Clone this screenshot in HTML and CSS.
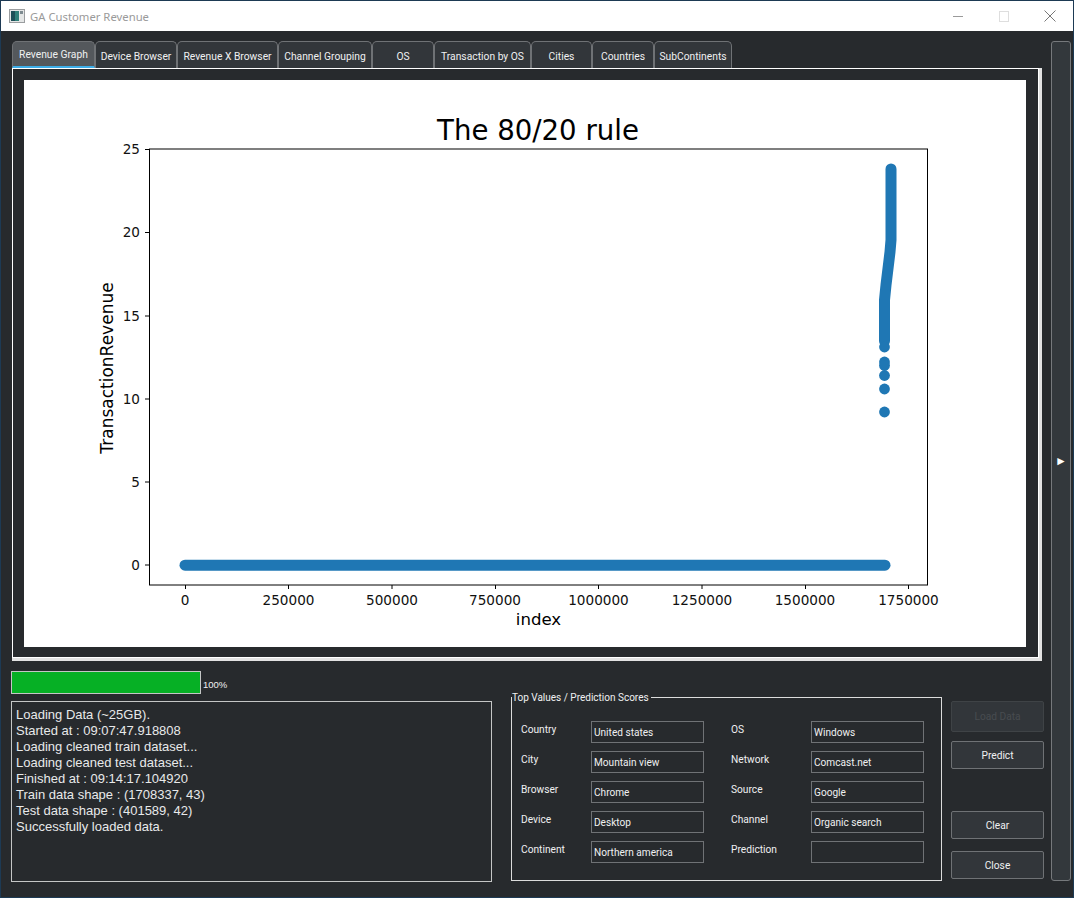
FILE: index.html
```html
<!DOCTYPE html>
<html lang="en">
  <head>
    <meta charset="UTF-8" />
    <meta name="viewport" content="width=device-width, initial-scale=1.0" />
    <title>GA Customer Revenue</title>
    <link rel="stylesheet" href="styles.css">
  </head>
  <body>
    <div class="window">
      <div class="titlebar">
        <svg class="app-icon" width="16" height="14" viewBox="0 0 16 14">
          <rect x="0.5" y="0.5" width="15" height="13" fill="#e4e6e6" stroke="#9a9d9f" />
          <rect x="2" y="2" width="8" height="10" fill="#2f7f78" />
          <rect x="2" y="2" width="4" height="10" fill="#1d4f57" />
          <rect x="11" y="2" width="3" height="3" fill="#7d8a90" />
        </svg>
        <span class="app-title">GA Customer Revenue</span>
        <div class="win-controls">
          <svg class="win-btn" width="46" height="30" viewBox="0 0 46 30">
            <path d="M18 15.5h10" stroke="#9a9a9a" />
          </svg>
          <svg class="win-btn" width="46" height="30" viewBox="0 0 46 30">
            <rect x="18.5" y="10.5" width="9" height="10" fill="none" stroke="#dedede" />
          </svg>
          <svg class="win-btn" width="46" height="30" viewBox="0 0 46 30">
            <path d="M17.5 9.5l11 11M28.5 9.5l-11 11" stroke="#777" fill="none" />
          </svg>
        </div>
      </div>

      <div class="content">
        <div class="left-side">
          <div class="tabs">
            <div class="tab active w1">Revenue Graph</div>
            <div class="tab w2">Device Browser</div>
            <div class="tab w3">Revenue X Browser</div>
            <div class="tab w4">Channel Grouping</div>
            <div class="tab w5">OS</div>
            <div class="tab w6">Transaction by OS</div>
            <div class="tab w7">Cities</div>
            <div class="tab w5">Countries</div>
            <div class="tab w8">SubContinents</div>
          </div>

          <div class="pane">
            <div class="pane-inner">
              <svg class="chart" width="1002" height="567" viewBox="24 80 1002 567">
                <rect x="24" y="80" width="1002" height="567" fill="#fff" />

                <!-- scatter -->
                <g fill="none" stroke="#1f77b4" stroke-linecap="round" stroke-width="11">
                  <path d="M185 565.2H885" />
                  <path d="M891 169V240L890 252L886 285L884.5 300V341" />
                </g>
                <g fill="#1f77b4">
                  <circle cx="884.5" cy="347" r="5.4" />
                  <circle cx="884.5" cy="362" r="5.4" />
                  <circle cx="884.5" cy="365.5" r="5.4" />
                  <circle cx="884.5" cy="375.5" r="5.4" />
                  <circle cx="884.5" cy="389" r="5.4" />
                  <circle cx="884.5" cy="412" r="5.4" />
                </g>

                <!-- axes -->
                <rect x="149.5" y="149" width="778" height="436" fill="none" stroke="#000" />
                <path stroke="#000" fill="none" d="M145 149.5h4M145 232.5h4M145 316h4M145 399h4M145 482h4M145 565h4M185.5 585v4M288.5 585v4M392 585v4M495.5 585v4M598.5 585v4M702 585v4M805.5 585v4M908.5 585v4" />

                <g class="tick" text-anchor="end">
                  <text x="140" y="154">25</text>
                  <text x="140" y="237">20</text>
                  <text x="140" y="321">15</text>
                  <text x="140" y="404">10</text>
                  <text x="140" y="487">5</text>
                  <text x="140" y="570">0</text>
                </g>
                <g class="tick" text-anchor="middle">
                  <text x="185" y="605">0</text>
                  <text x="288.5" y="605">250000</text>
                  <text x="392" y="605">500000</text>
                  <text x="495" y="605">750000</text>
                  <text x="598.5" y="605">1000000</text>
                  <text x="702" y="605">1250000</text>
                  <text x="805" y="605">1500000</text>
                  <text x="908.5" y="605">1750000</text>
                </g>

                <text class="chart-title" x="538" y="140" text-anchor="middle">The 80/20 rule</text>
                <text class="axis-label axis-x" x="538.5" y="625" text-anchor="middle">index</text>
                <text class="axis-label" transform="translate(112.5 368) rotate(-90)" text-anchor="middle">TransactionRevenue</text>
              </svg>
            </div>
          </div>

          <div class="bottom">
            <div class="status">
              <div class="progress-row">
                <div class="progress"><div class="progress-fill"></div></div>
                <span class="progress-text">100%</span>
              </div>
              <div class="log">
                <div>Loading Data (~25GB).</div>
                <div>Started at : 09:07:47.918808</div>
                <div>Loading cleaned train dataset...</div>
                <div>Loading cleaned test dataset...</div>
                <div>Finished at : 09:14:17.104920</div>
                <div>Train data shape : (1708337, 43)</div>
                <div>Test data shape : (401589, 42)</div>
                <div>Successfully loaded data.</div>
              </div>
            </div>

            <fieldset class="scores">
              <legend>Top Values / Prediction Scores</legend>
              <div class="score-grid">
                <label>Country</label>
                <div class="value">United states</div>
                <label>OS</label>
                <div class="value">Windows</div>

                <label>City</label>
                <div class="value">Mountain view</div>
                <label>Network</label>
                <div class="value">Comcast.net</div>

                <label>Browser</label>
                <div class="value">Chrome</div>
                <label>Source</label>
                <div class="value">Google</div>

                <label>Device</label>
                <div class="value">Desktop</div>
                <label>Channel</label>
                <div class="value">Organic search</div>

                <label>Continent</label>
                <div class="value">Northern america</div>
                <label>Prediction</label>
                <div class="value"></div>
              </div>
            </fieldset>

            <div class="actions">
              <button type="button" class="btn-load" disabled>Load Data</button>
              <button type="button" class="btn-predict">Predict</button>
              <button type="button" class="btn-clear">Clear</button>
              <button type="button">Close</button>
            </div>
          </div>
        </div>

        <div class="side-toggle">&#9658;</div>
      </div>
    </div>
  </body>
</html>
```

FILE: styles.css
```css
* {
  margin: 0;
  padding: 0;
  box-sizing: border-box;
}

body {
  background-color: #272a2d;
  font-family: "Roboto", "Liberation Sans", sans-serif;
  font-size: 10.2px;
  color: #eff0f1;
  overflow: hidden;
}

.window {
  width: 1074px;
  height: 898px;
  display: flex;
  flex-direction: column;
  border: 1px solid #1d3a54;
  background-color: #272a2d;
}

.titlebar {
  height: 30px;
  flex-shrink: 0;
  background-color: #fff;
  display: flex;
  align-items: center;
  padding-left: 8px;
}

.app-icon {
  margin-right: 5px;
}

.app-title {
  font-family: "Noto Sans", sans-serif;
  font-size: 11.3px;
  color: #9a9a9a;
}

.win-controls {
  margin-left: auto;
  display: flex;
}

.content {
  flex: 1;
  display: flex;
  padding: 10px 2px 15px 10px;
  min-height: 0;
}

.left-side {
  width: 1033px;
  display: flex;
  flex-direction: column;
}

/* tabs */
.tabs {
  display: flex;
  height: 27px;
  flex-shrink: 0;
  margin-left: 1px;
}

.tab {
  display: flex;
  align-items: center;
  justify-content: center;
  padding-top: 3px;
  background-color: #32363a;
  border: 1px solid #6f7275;
  border-bottom: none;
  border-radius: 5px 5px 0 0;
  font-size: 10.3px;
  white-space: nowrap;
}

.tab.active {
  background-color: #54585c;
  border-bottom: 2px solid #3daee9;
  padding-top: 0;
}

.w1 { width: 83px; }
.w2 { width: 82px; }
.w3 { width: 101px; }
.w4 { width: 94px; }
.w5 { width: 62px; }
.w6 { width: 97px; }
.w7 { width: 61px; }
.w8 { width: 78px; }

.pane {
  margin-left: 1px;
  width: 1030px;
  height: 593px;
  border-right: 3px solid #e2e2e2;
  border-bottom: 3px solid #e2e2e2;
  flex-shrink: 0;
}

.pane-inner {
  width: 100%;
  height: 100%;
  border: 1px solid #fff;
  padding: 11px;
}

.chart {
  display: block;
}

.tick {
  font-family: "DejaVu Sans", sans-serif;
  font-size: 13.6px;
  fill: #111;
}

.chart-title {
  font-family: "DejaVu Sans", sans-serif;
  font-size: 27.6px;
  fill: #000;
}

.axis-label {
  font-family: "DejaVu Sans", sans-serif;
  font-size: 17px;
  fill: #000;
}

.axis-x {
  font-size: 16.6px;
}

/* bottom panel */
.bottom {
  display: flex;
  margin-top: 10px;
  flex: 1;
}

.status {
  width: 481px;
  margin-right: 19px;
}

.progress-row {
  display: flex;
  align-items: center;
  height: 23px;
  margin-bottom: 7px;
}

.progress {
  width: 190px;
  height: 23px;
  border: 1px solid #c4c6c6;
  background-color: #272a2d;
}

.progress-fill {
  width: 100%;
  height: 100%;
  background-color: #06b025;
}

.progress-text {
  margin-left: 2px;
  margin-top: 3px;
  font-family: "Liberation Sans", sans-serif;
  font-size: 9.5px;
}

.log {
  height: 181px;
  border: 1px solid #c4c6c6;
  padding: 5px 4px;
  font-family: "Liberation Sans", sans-serif;
  font-size: 13px;
  line-height: 16px;
  color: #e8e9ea;
}

.scores {
  width: 431px;
  height: 190px;
  margin-top: 20px;
  border: 1px solid #dcdcdc;
  padding: 17px 9px 0;
}

.scores legend {
  margin-left: -9px;
  padding-right: 2px;
  font-size: 10px;
  line-height: 13px;
}

.score-grid {
  display: grid;
  grid-template-columns: 70px 113px 107px 113px;
  grid-auto-rows: 22px;
  row-gap: 8px;
}

.score-grid label {
  line-height: 18px;
}

.score-grid label:nth-child(4n + 3) {
  margin-left: 27px;
}

.value {
  border: 1px solid #6f7275;
  padding: 1px 2px 0;
  font-size: 10.1px;
  line-height: 19px;
}

.actions {
  width: 93px;
  margin-left: 9px;
  margin-top: 30px;
  display: flex;
  flex-direction: column;
}

button {
  height: 28px;
  width: 93px;
  margin-bottom: 12px;
  background-color: #32363a;
  color: #eff0f1;
  border: 1px solid #6f7275;
  border-radius: 2px;
  font-family: "Roboto", "Liberation Sans", sans-serif;
  font-size: 10.2px;
}

.btn-load {
  height: 31px;
  margin-bottom: 9px;
  border-color: #3f4346;
  color: #484c50;
}

.btn-predict {
  margin-bottom: 42px;
}

.side-toggle {
  width: 20px;
  margin-left: 7px;
  height: 840px;
  background-color: #33383c;
  border: 1px solid #76797c;
  border-radius: 3px;
  display: flex;
  align-items: center;
  justify-content: center;
  font-size: 12px;
  color: #fff;
}
```
